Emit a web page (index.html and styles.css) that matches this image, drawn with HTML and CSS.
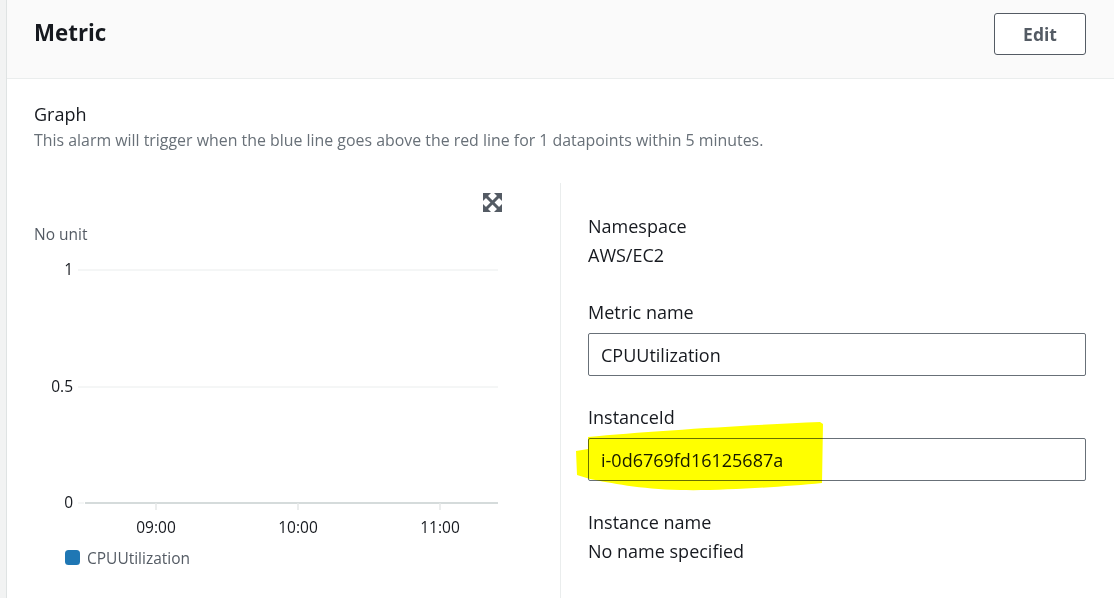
FILE: index.html
```html
<!DOCTYPE html>
<html lang="en">
<head>
<meta charset="utf-8">
<title>Metric</title>
<link rel="stylesheet" href="styles.css">
</head>
<body>
<div class="card">
  <div class="card-header">
    <h2 class="title">Metric</h2>
    <button class="btn">Edit</button>
  </div>
  <div class="card-body">
    <div class="section-title">Graph</div>
    <div class="section-desc">This alarm will trigger when the blue line goes above the red line for 1 datapoints within 5 minutes.</div>
    <div class="columns">
      <div class="graph-col">
        <svg class="chart" width="526" height="415" viewBox="0 0 526 415">
          <g class="expand" fill="#545b64">
            <polygon points="449,10 457,10 449,18"/>
            <polygon points="468,10 460,10 468,18"/>
            <polygon points="449,29 457,29 449,21"/>
            <polygon points="468,29 460,29 468,21"/>
            <line x1="451" y1="12" x2="466" y2="27" stroke="#545b64" stroke-width="3"/>
            <line x1="466" y1="12" x2="451" y2="27" stroke="#545b64" stroke-width="3"/>
          </g>
          <text class="unit" x="0" y="57">No unit</text>
          <line x1="44" y1="87" x2="464" y2="87" class="grid"/>
          <line x1="44" y1="204" x2="464" y2="204" class="grid"/>
          <line x1="44" y1="320" x2="50" y2="320" class="grid"/>
          <line x1="51" y1="320" x2="464" y2="320" class="axis"/>
          <line x1="122" y1="320" x2="122" y2="327" class="tick"/>
          <line x1="264" y1="320" x2="264" y2="327" class="tick"/>
          <line x1="406" y1="320" x2="406" y2="327" class="tick"/>
          <text class="ylab" x="39" y="92" text-anchor="end">1</text>
          <text class="ylab" x="39" y="209" text-anchor="end">0.5</text>
          <text class="ylab" x="39" y="325" text-anchor="end">0</text>
          <text class="xlab" x="122" y="350" text-anchor="middle">09:00</text>
          <text class="xlab" x="264" y="350" text-anchor="middle">10:00</text>
          <text class="xlab" x="406" y="350" text-anchor="middle">11:00</text>
          <rect x="31" y="367" width="15" height="15" rx="3.5" fill="#1f77b4"/>
          <text class="legend" x="53" y="381">CPUUtilization</text>
        </svg>
      </div>
      <div class="detail-col">
        <div class="field">
          <div class="label">Namespace</div>
          <div class="value">AWS/EC2</div>
        </div>
        <div class="field field-input">
          <div class="label">Metric name</div>
          <div class="input">CPUUtilization</div>
        </div>
        <div class="field field-input highlighted">
          <div class="label">InstanceId</div>
          <div class="input">i-0d6769fd16125687a</div>
          <svg class="marker" width="252" height="74" viewBox="0 0 252 74">
            <path d="M14 18 C76 12 176 6 246 3 L249 5 L248 64 C206 68 146 72 106 71 C66 70 36 64 16 60 L3 56 L2 32 L14 30 Z" fill="#ffff00"/>
          </svg>
        </div>
        <div class="field field-last">
          <div class="label">Instance name</div>
          <div class="value">No name specified</div>
        </div>
      </div>
    </div>
  </div>
</div>
</body>
</html>
```

FILE: styles.css
```css
html, body {
  margin: 0;
  padding: 0;
  height: 100%;
  overflow: hidden;
}
body {
  background: #f2f3f3;
  padding-left: 6px;
  font-family: "Open Sans", "Noto Sans", sans-serif;
  color: #16191f;
  box-sizing: border-box;
}
.card {
  background: #ffffff;
  border-left: 1px solid #dfe3e3;
  height: 100%;
  display: flex;
  flex-direction: column;
}
.card-header {
  height: 79px;
  box-sizing: border-box;
  background: #fafafa;
  border-bottom: 1px solid #eaeded;
  display: flex;
  justify-content: space-between;
  align-items: flex-start;
  padding: 13px 28px 0 27px;
}
.title {
  margin: 0;
  font-size: 22.3px;
  font-weight: 700;
  line-height: 40px;
  color: #16191f;
}
.btn {
  height: 42px;
  width: 92px;
  border: 1px solid #545b64;
  border-radius: 3px;
  background: #ffffff;
  color: #545b64;
  font-family: "Open Sans", "Noto Sans", sans-serif;
  font-size: 17.5px;
  font-weight: 700;
  padding: 0;
}
.card-body {
  flex: 1;
  display: flex;
  flex-direction: column;
  padding: 24px 28px 0 27px;
  min-height: 0;
}
.section-title {
  font-size: 18px;
  line-height: 22px;
}
.section-desc {
  margin-top: 4px;
  font-size: 15.9px;
  line-height: 22px;
  color: #687078;
}
.columns {
  margin-top: 32px;
  flex: 1;
  display: flex;
}
.graph-col {
  width: 526px;
  border-right: 1px solid #eaeded;
  flex: none;
}
.chart {
  display: block;
  font-family: "Open Sans", "Noto Sans", sans-serif;
}
.unit, .legend {
  font-size: 15.5px;
  fill: #545b64;
}
.ylab, .xlab {
  font-size: 15.5px;
  fill: #16191f;
}
.grid {
  stroke: #eaeded;
  stroke-width: 1;
}
.axis {
  stroke: #d5dbdb;
  stroke-width: 2;
}
.tick {
  stroke: #e4e7e7;
  stroke-width: 1.5;
}
.detail-col {
  flex: 1;
  padding: 31px 0 0 27px;
  display: flex;
  flex-direction: column;
}
.field {
  position: relative;
  display: flex;
  flex-direction: column;
}
.field + .field {
  margin-top: 33px;
}
.field-input + .field-input {
  margin-top: 29px;
}
.field + .field-last {
  margin-top: 29px;
}
.label, .value {
  font-size: 18px;
  line-height: 24px;
}
.value {
  margin-top: 5px;
}
.input {
  margin-top: 9px;
  height: 43px;
  box-sizing: border-box;
  border: 1px solid #687078;
  border-radius: 2px;
  padding: 0 12px;
  display: flex;
  align-items: center;
  font-size: 18px;
}
.marker {
  position: absolute;
  left: -14px;
  top: 14px;
  mix-blend-mode: multiply;
  pointer-events: none;
}
```
